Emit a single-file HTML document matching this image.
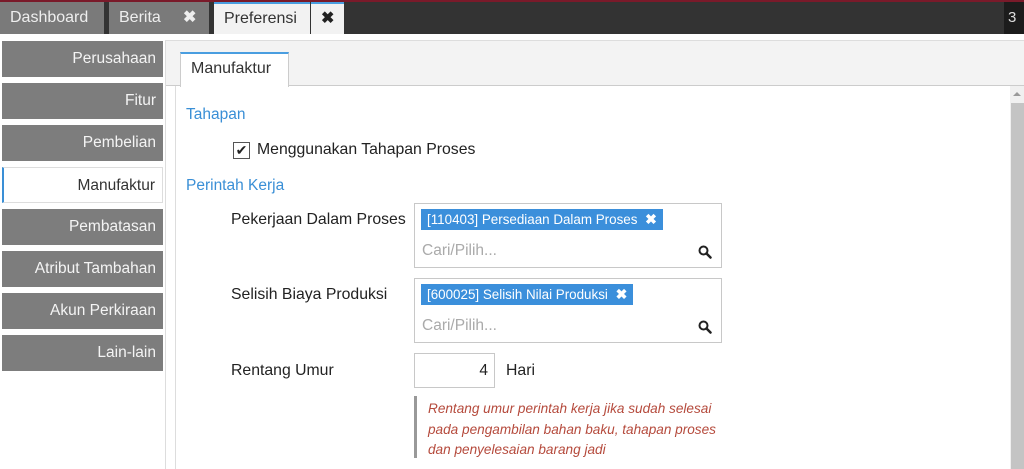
<!DOCTYPE html>
<html><head><style>
*{box-sizing:border-box;margin:0;padding:0}
body{width:1024px;height:469px;overflow:hidden;background:#f3f3f3;font-family:"Liberation Sans",sans-serif;position:relative}
.abs{position:absolute}
.top{left:0;top:0;width:1024px;height:34px;background:#333;border-top:2px solid #7a1a2a}
.tab{top:2px;height:32px;font-size:16px;line-height:32px;color:#eee;background:#7a7a7a;padding-left:10px}
.side{left:2px;width:161px;height:36px;background:#7d7d7d;color:#f4f4f4;font-size:15.5px;text-align:right;padding-right:7px;line-height:36px}
.lbl{font-size:15.8px;color:#222}
.sec{font-size:15.5px;color:#3a8fd6;left:186px}
.box{border:1px solid #c8c8c8;background:#fff}
.tag{background:#3b8fdb;color:#fff;font-size:13.4px;height:21px;line-height:21px;padding:0 6px}
.ph{color:#aaa;font-size:15.5px}
</style></head><body>
<div class="abs top"></div>
<div class="abs tab" style="left:0;width:104px">Dashboard</div>
<div class="abs tab" style="left:109px;width:100px">Berita<span style="position:absolute;left:74px;font-weight:bold">✖</span></div>
<div class="abs tab" style="left:214px;width:96px;background:#f2f2f2;color:#333;border-top:2px solid #4a9ee0;line-height:30px">Preferensi</div>
<div class="abs tab" style="left:311px;width:33px;background:#f2f2f2;color:#222;border-top:2px solid #4a9ee0;line-height:30px;font-weight:bold">✖</div>
<div class="abs" style="left:1004px;top:2px;width:20px;height:32px;background:#1c1c1c;color:#ddd;font-size:15px;line-height:32px;padding-left:4px">3</div>

<div class="abs" style="left:0;top:34px;width:1024px;height:435px;background:#fff"></div>
<div class="abs" style="left:165px;top:40px;width:859px;height:46px;background:#f3f3f3;border-top:1px solid #ddd;border-bottom:1px solid #ccc"></div>
<div class="abs" style="left:175px;top:86px;width:1px;height:383px;background:#ddd"></div>
<div class="abs" style="left:165px;top:40px;width:1px;height:429px;background:#ddd"></div>
<div class="abs" style="left:180px;top:52px;width:109px;height:35px;background:#fff;border:1px solid #ccc;border-top:2px solid #4a9ee0;border-bottom:none;font-size:16px;color:#333;padding:6px 0 0 10px">Manufaktur</div>

<div class="abs side" style="top:41px">Perusahaan</div>
<div class="abs side" style="top:83px">Fitur</div>
<div class="abs side" style="top:125px">Pembelian</div>
<div class="abs side" style="top:167px;background:#fff;color:#333;border:1px solid #ddd;border-left:2px solid #3a8fd6">Manufaktur</div>
<div class="abs side" style="top:209px">Pembatasan</div>
<div class="abs side" style="top:251px">Atribut Tambahan</div>
<div class="abs side" style="top:293px">Akun Perkiraan</div>
<div class="abs side" style="top:335px">Lain-lain</div>

<div class="abs sec" style="top:106px">Tahapan</div>
<div class="abs box" style="left:233px;top:142px;width:17px;height:17px;border-color:#555;font-size:14px;line-height:15px;text-align:center;color:#222">✔</div>
<div class="abs lbl" style="left:257px;top:141px">Menggunakan Tahapan Proses</div>
<div class="abs sec" style="top:177px">Perintah Kerja</div>

<div class="abs lbl" style="left:231px;top:211px">Pekerjaan Dalam Proses</div>
<div class="abs box" style="left:414px;top:203px;width:308px;height:65px"></div>
<div class="abs tag" style="left:421px;top:209px">[110403] Persediaan Dalam Proses <b style="margin-left:4px;font-size:14px">✖</b></div>
<div class="abs ph" style="left:422px;top:242px">Cari/Pilih...</div>
<svg class="abs" style="left:698px;top:245px" width="14" height="14" viewBox="0 0 14 14"><circle cx="5.5" cy="5.5" r="4" fill="none" stroke="#222" stroke-width="2"/><path d="M8.5 8.5L12.5 12.5" stroke="#222" stroke-width="2.5" stroke-linecap="round"/></svg>

<div class="abs lbl" style="left:231px;top:286px">Selisih Biaya Produksi</div>
<div class="abs box" style="left:414px;top:278px;width:308px;height:65px"></div>
<div class="abs tag" style="left:421px;top:284px">[600025] Selisih Nilai Produksi <b style="margin-left:4px;font-size:14px">✖</b></div>
<div class="abs ph" style="left:422px;top:317px">Cari/Pilih...</div>
<svg class="abs" style="left:698px;top:320px" width="14" height="14" viewBox="0 0 14 14"><circle cx="5.5" cy="5.5" r="4" fill="none" stroke="#222" stroke-width="2"/><path d="M8.5 8.5L12.5 12.5" stroke="#222" stroke-width="2.5" stroke-linecap="round"/></svg>

<div class="abs lbl" style="left:231px;top:362px">Rentang Umur</div>
<div class="abs box" style="left:414px;top:353px;width:81px;height:35px;font-size:15.5px;text-align:right;padding:8px 6px 0 0;color:#222">4</div>
<div class="abs lbl" style="left:506px;top:362px">Hari</div>
<div class="abs" style="left:414px;top:396px;width:3px;height:62px;background:#999"></div>
<div class="abs" style="left:428px;top:399px;font-size:13.6px;line-height:20.5px;color:#b54a3c;font-style:italic">Rentang umur perintah kerja jika sudah selesai<br>pada pengambilan bahan baku, tahapan proses<br>dan penyelesaian barang jadi</div>

<div class="abs" style="left:1010px;top:86px;width:14px;height:383px;background:#f0f0f0"></div>
<div class="abs" style="left:1011px;top:103px;width:13px;height:366px;background:#c4c4c4"></div>
<div class="abs" style="left:1013px;top:92px;width:0;height:0;border-left:4px solid transparent;border-right:4px solid transparent;border-bottom:4px solid #999"></div>
</body></html>
